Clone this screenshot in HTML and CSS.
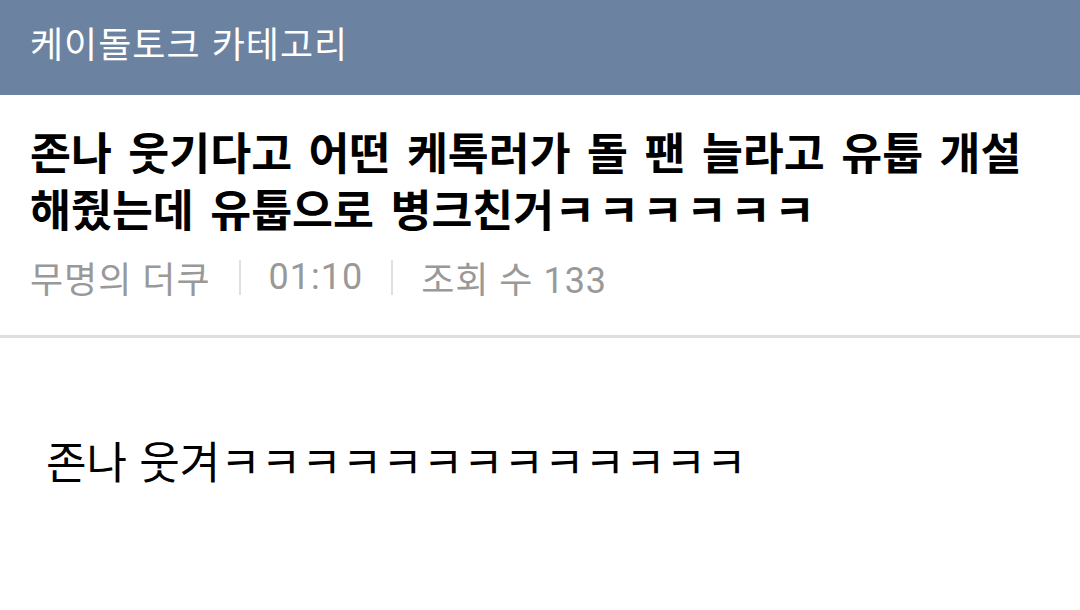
FILE: index.html
```html
<!DOCTYPE html>
<html lang="ko">
<head>
<meta charset="utf-8">
<link rel="stylesheet" href="styles.css">
</head>
<body>
<header class="topbar">
  <h1 class="cat">케이돌토크 카테고리</h1>
</header>
<section class="post-head">
  <h2 class="title">존나 웃기다고 어떤 케톡러가 돌 팬 늘라고 유툽 개설 해줬는데 유툽으로 병크친거<span class="kk">ㅋㅋㅋㅋㅋㅋ</span></h2>
  <div class="meta">
    <span class="m">무명의 더쿠</span>
    <span class="sep"></span>
    <span class="m">01:10</span>
    <span class="sep"></span>
    <span class="m">조회 수 133</span>
  </div>
</section>
<article class="body">
  <p class="text">존나 웃겨ㅋㅋㅋㅋㅋㅋㅋㅋㅋㅋㅋㅋㅋ</p>
</article>
</body>
</html>
```
FILE: styles.css
```css
html, body {
  margin: 0;
  padding: 0;
  background: #fff;
  width: 1080px;
  height: 610px;
  overflow: hidden;
  font-family: "Noto Sans CJK KR", "Noto Sans", sans-serif;
}
.topbar {
  background: #6b82a1;
  height: 95px;
  display: flex;
  align-items: center;
  padding: 0 30px;
  box-sizing: border-box;
}
.cat {
  margin: 0;
  color: #fff;
  font-size: 36px;
  font-weight: 400;
  letter-spacing: 1px;
  line-height: 1;
  margin-top: -12px;
}
.post-head {
  padding: 27px 30px 0 30px;
  height: 243px;
  box-sizing: border-box;
  border-bottom: 3px solid #dedede;
}
.title {
  margin: 0;
  font-size: 44.5px;
  font-weight: 700;
  line-height: 57px;
  color: #000;
  word-spacing: 4px;
  word-break: keep-all;
}
.kk {
  letter-spacing: 3px;
}
.meta {
  display: flex;
  align-items: center;
  margin-top: 16px;
  height: 50px;
  color: #999;
  font-family: "Roboto", "Noto Sans CJK KR", sans-serif;
  font-size: 36px;
  letter-spacing: 1px;
}
.sep {
  width: 2px;
  height: 35px;
  background: #e0e0e0;
  margin: 0 28px;
}
.body {
  padding: 97px 46px 0 46px;
}
.text {
  margin: 0;
  font-size: 44px;
  line-height: 50px;
  color: #000;
  word-break: keep-all;
}
```
